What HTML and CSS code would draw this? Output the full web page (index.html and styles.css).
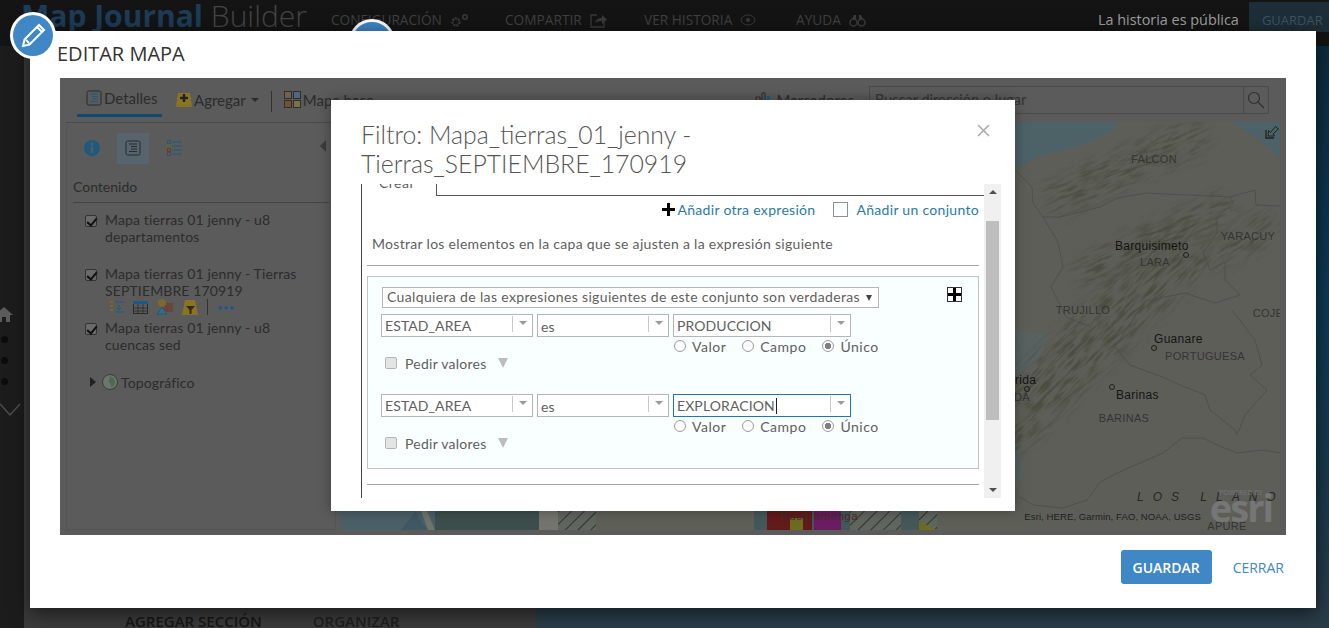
FILE: index.html
```html
<!DOCTYPE html>
<html lang="en">
<head>
    <meta charset="UTF-8">
    <meta name="viewport" content="width=device-width, initial-scale=1.0">
    <title>Map Journal Builder</title>
    <link rel="stylesheet" href="styles.css">
</head>
<body>

    <!-- Builder behind the dialogs -->
    <div class="topbar">
        <div class="brand"><strong>Map Journal</strong> <span>Builder</span></div>
        <div class="topnav">
            <span class="nav-config">CONFIGURACIÓN
                <svg width="20" height="14" viewBox="0 0 20 14"><circle cx="6" cy="9" r="3.5" fill="none" stroke="#3a3a3a" stroke-width="2.4" stroke-dasharray="2 1"/><circle cx="15" cy="4" r="2.2" fill="none" stroke="#3a3a3a" stroke-width="1.5"/></svg>
            </span>
            <span class="nav-share">COMPARTIR
                <svg width="18" height="15" viewBox="0 0 18 15"><path d="M7 2H1v12h13V9" fill="none" stroke="#3a3a3a" stroke-width="1.3"/><path d="M5 10c1-4 4-5 7-5V2l5 4.500-5 4.500V8c-3 0-5 .5-7 2z" fill="#3a3a3a"/></svg>
            </span>
            <span class="nav-history">VER HISTORIA
                <svg width="16" height="12" viewBox="0 0 16 12"><ellipse cx="8" cy="6" rx="7" ry="5" fill="none" stroke="#3a3a3a"/><circle cx="8" cy="6" r="2" fill="#3a3a3a"/></svg>
            </span>
            <span class="nav-help">AYUDA
                <svg width="17" height="13" viewBox="0 0 17 13"><circle cx="4.500" cy="8.500" r="3.500" fill="none" stroke="#3a3a3a" stroke-width="1.600"/><circle cx="12.500" cy="8.500" r="3.500" fill="none" stroke="#3a3a3a" stroke-width="1.600"/><path d="M3 5l2-4h2v4M14 5l-2-4h-2v4" fill="#3a3a3a"/></svg>
            </span>
        </div>
        <div class="public-note">La historia es pública</div>
        <div class="top-save">GUARDAR</div>
    </div>

    <div class="workspace">
        <div class="rail">
            <svg class="rail-home" width="18" height="16" viewBox="0 0 18 16"><path d="M9 1L0 9h3v7h4v-5h4v5h4V9h3z" fill="#5c5c5c"/></svg>
            <span class="rail-dot"></span>
            <span class="rail-dot"></span>
            <span class="rail-dot"></span>
            <svg class="rail-check" width="22" height="14" viewBox="0 0 22 14"><path d="M1 1l10 11L21 1" fill="none" stroke="#4d4d4d" stroke-width="1.500"/></svg>
        </div>
        <div class="panel-side">
            <div class="side-tabs">
                <span>AGREGAR SECCIÓN</span>
                <span>ORGANIZAR</span>
            </div>
        </div>
        <div class="stage"></div>
    </div>

    <span class="top-circle"></span>

    <!-- Editar mapa -->
    <div class="edit-modal">
        <h2 class="edit-title">EDITAR MAPA</h2>

        <div class="map-frame">
            <div class="map-toolbar">
                <div class="tool tool-active">
                    <svg width="16" height="16" viewBox="0 0 16 16"><rect x="1" y="1" width="14" height="14" rx="1.500" fill="none" stroke="#2b2b2b"/><path d="M4 4h8M6 6.500h6M6 9h6M4 11.500h8" stroke="#1d5a80"/></svg>
                    Detalles
                </div>
                <div class="tool tool-add">
                    <svg width="18" height="16" viewBox="0 0 18 16"><path d="M3 1h12l2 14H1z" fill="#8a7420"/><path d="M9 2v8M5 6h8" stroke="#222" stroke-width="2.500"/></svg>
                    Agregar <i class="caret"></i>
                </div>
                <span class="tool-sep"></span>
                <div class="tool tool-base">
                    <svg width="17" height="17" viewBox="0 0 17 17"><g fill="#6d6350" stroke="#2f2f2f"><rect x=".5" y=".5" width="7" height="7"/><rect x="9.500" y=".5" width="7" height="7" fill="#4a6a80"/><rect x=".5" y="9.500" width="7" height="7" fill="#75522f"/><rect x="9.500" y="9.500" width="7" height="7" fill="#7a7440"/></g></svg>
                    Mapa base
                </div>
                <div class="tool tool-marks">
                    <svg width="16" height="16" viewBox="0 0 16 16"><path d="M1 15V5h4v10M7 15V1h3v14" fill="none" stroke="#2b2b2b"/><path d="M12 15V4h3v11z" fill="#1d5a80"/></svg>
                    Marcadores
                </div>
                <div class="map-search">
                    <span class="search-text">Buscar dirección o lugar</span>
                    <span class="search-btn">
                        <svg width="18" height="18" viewBox="0 0 18 18"><circle cx="7" cy="7" r="5.500" fill="none" stroke="#2f2f2f" stroke-width="1.200"/><path d="M11 11l6 6" stroke="#2f2f2f" stroke-width="1.200"/></svg>
                    </span>
                </div>
            </div>

            <div class="map-body">
                <div class="contents">
                    <div class="contents-tabs">
                        <svg class="info-icon" width="16" height="16" viewBox="0 0 16 16"><circle cx="8" cy="8" r="8" fill="#1d5a80"/><rect x="6.800" y="6.500" width="2.400" height="6.500" fill="#5b5b5b"/><circle cx="8" cy="4" r="1.400" fill="#5b5b5b"/></svg>
                        <span class="contents-active">
                            <svg width="16" height="16" viewBox="0 0 16 16"><rect x="1" y="1" width="14" height="14" rx="1.500" fill="none" stroke="#2b2b2b"/><path d="M4 4h8M6 6.500h6M6 9h6M4 11.500h8" stroke="#2b2b2b"/></svg>
                        </span>
                        <svg class="legend-icon" width="14" height="16" viewBox="0 0 14 16"><path d="M5 2h9M5 6h9M5 10h9M5 14h9" stroke="#1d5a80"/><g fill="none"><rect x=".5" y=".5" width="3" height="3" stroke="#33566c"/><rect x=".5" y="4.500" width="3" height="3" stroke="#4f6a3a"/><rect x=".5" y="8.500" width="3" height="3" stroke="#6a3a2a"/><rect x=".5" y="12.500" width="3" height="3" stroke="#4d4466"/></g></svg>
                        <i class="collapse-arrow"></i>
                    </div>
                    <div class="contents-head">Contenido</div>
                    <ul class="layers">
                        <li class="layer">
                            <span class="layer-check"></span>
                            <span>Mapa tierras 01 jenny - u8<br>departamentos</span>
                        </li>
                        <li class="layer">
                            <span class="layer-check"></span>
                            <div>
                                <span>Mapa tierras 01 jenny - Tierras<br>SEPTIEMBRE 170919</span>
                                <div class="layer-icons">
                                    <svg width="14" height="14" viewBox="0 0 14 14"><path d="M5 2h9M5 12h9M9 5v5M7 8l2 2 2-2" stroke="#1d5a80" fill="none"/><path d="M0 2h3M0 6h3M0 10h3" stroke="#7a6a20" stroke-width="2"/></svg>
                                    <svg width="15" height="13" viewBox="0 0 15 13"><rect x=".5" y=".5" width="14" height="12" fill="none" stroke="#2b2b2b"/><path d="M0 1.500h15" stroke="#1d5a80" stroke-width="3"/><path d="M5 3v10M10 3v10M0 7h15M0 10h15" stroke="#2b2b2b" stroke-width=".8"/></svg>
                                    <svg width="16" height="16" viewBox="0 0 16 16"><rect x="6" y="4" width="10" height="9" fill="#6b4538"/><circle cx="5" cy="4" r="4" fill="#7a6a30"/><path d="M5 8l5 7H0z" fill="#3c6a85" stroke="#1d5a80"/></svg>
                                    <svg width="16" height="15" viewBox="0 0 16 15"><path d="M3 0h10l3 15H0z" fill="#8a7420"/><path d="M4 6h9l-3.500 4v4h-2v-4z" fill="#2b2b2b"/></svg>
                                    <i class="icons-sep"></i>
                                    <span class="more-dots">•••</span>
                                </div>
                            </div>
                        </li>
                        <li class="layer">
                            <span class="layer-check"></span>
                            <span>Mapa tierras 01 jenny - u8<br>cuencas sed</span>
                        </li>
                        <li class="layer layer-base">
                            <i class="layer-arrow"></i>
                            <svg width="16" height="16" viewBox="0 0 16 16"><circle cx="8" cy="8" r="7.500" fill="#6d7570" stroke="#3c3c3c"/><path d="M8 2c3 1 5 3 5 6s-2 5-4 5c1-3-3-4-2-7z" fill="#4c6a52"/></svg>
                            <span>Topográfico</span>
                        </li>
                    </ul>
                </div>

                <div class="map-view">
                    <svg class="map-svg" width="939" height="408" viewBox="341 122 939 408">
                        <defs>
                            <pattern id="hatch" width="9" height="9" patternUnits="userSpaceOnUse" patternTransform="rotate(45)">
                                <rect width="9" height="9" fill="#5f665e"/>
                                <path d="M0 0v9" stroke="#111" stroke-width="1.200"/>
                            </pattern>
                            <filter id="terrain" x="-10%" y="-30%" width="120%" height="160%" color-interpolation-filters="sRGB">
                                <feGaussianBlur in="SourceGraphic" stdDeviation="9" result="soft"/>
                                <feTurbulence type="fractalNoise" baseFrequency=".05 .35" numOctaves="3" seed="4"/>
                                <feColorMatrix values="0 0 0 0 .29  0 0 0 0 .30  0 0 0 0 .25  0 0 0 3.500 -1.500"/>
                                <feComposite in2="soft" operator="in"/>
                            </filter>
                        </defs>
                        <rect x="341" y="122" width="939" height="408" fill="#5e5e59"/>
                        <path d="M1015 122h105l-10 10-27 13-45 12-23 13zM1230 122h50v35l-13-10-17-14z" fill="#4d6266"/>
                        <path d="M1015 330l35 5-12 25-23 20zM1015 430l10 40-10 20z" fill="#53646a" opacity=".5"/>

                        <!-- mountains -->
                        <rect x="960" y="305" width="280" height="60" fill="#000" filter="url(#terrain)" transform="rotate(-45 1100 340)"/>
                        <rect x="1040" y="150" width="170" height="36" fill="#000" filter="url(#terrain)" transform="rotate(-24 1125 165)"/>
                        <rect x="1070" y="225" width="170" height="36" fill="#000" filter="url(#terrain)" transform="rotate(-24 1150 240)"/>
                        <rect x="1210" y="225" width="70" height="30" fill="#000" filter="url(#terrain)" transform="rotate(-35 1245 240)"/>

                        <g fill="none" stroke="#4f4f4f" stroke-width="1">
                            <path d="M1015 170l17 17 1 16 10 14h17l40-10 17-9 30-5 40 2 43 2 3 6-16 14v16l-14 20 7 17 15-8v18l15 15"/>
                            <path d="M1230 197l25-7 1 15 24 1"/>
                            <path d="M1043 217l15 25 5 25-12 20 15 30 25 10"/>
                            <path d="M1115 347l15 18 35 13 15 7 25 10 5 15 25 20 2 5 8-20 22-25-17-15 12-10-7-25-23-30"/>
                            <path d="M1020 497l13 8 30 3 24-8 13-18 17-9 23-10 23-10 19-15h21l14 7 20 8 26-3 17 3"/>
                            <path d="M1240 295l-25 8-30-10-40 8-30 46"/>
                        </g>

                        <!-- bottom strip, shows under the filter dialog -->
                        <rect x="341" y="511" width="94" height="19" fill="#4a5f68"/>
                        <path d="M401 530l14-18 12 18z" fill="#3f5864"/>
                        <path d="M421 511h6l8 19h-7z" fill="#6f746d"/>
                        <rect x="435" y="511" width="104" height="19" fill="#3d4f4d"/>
                        <rect x="539" y="511" width="19" height="19" fill="#74756f"/>
                        <rect x="558" y="511" width="38" height="19" fill="url(#hatch)"/>
                        <rect x="596" y="511" width="158" height="19" fill="#5e6058"/>
                        <rect x="754" y="511" width="13" height="19" fill="#44585a"/>
                        <rect x="767" y="511" width="45" height="19" fill="#631a1a"/>
                        <rect x="790" y="518" width="13" height="12" fill="#6c6c20"/>
                        <rect x="812" y="511" width="2" height="19" fill="#44585a"/>
                        <rect x="814" y="511" width="27" height="19" fill="#6c1c63"/>
                        <rect x="841" y="511" width="9" height="19" fill="#44585a"/>
                        <rect x="850" y="511" width="51" height="19" fill="url(#hatch)"/>
                        <rect x="901" y="511" width="18" height="19" fill="#44585a"/>
                        <rect x="919" y="511" width="18" height="19" fill="url(#hatch)"/>
                        <path d="M919 521l18 9h-18z" fill="#6c6c20"/>
                        <rect x="937" y="511" width="78" height="19" fill="#5e6058"/>
                        <text class="lbl-dim" x="781" y="520">Bucaramanga</text>

                        <g>
                            <text class="lbl-state" x="1154" y="163">FALCON</text>
                            <text class="lbl-state" x="1248" y="240">YARACUY</text>
                            <text class="lbl-state" x="1155" y="266">LARA</text>
                            <text class="lbl-state" x="1083" y="314">TRUJILLO</text>
                            <text class="lbl-state" x="1268" y="317">COJE</text>
                            <text class="lbl-state" x="1205" y="360">PORTUGUESA</text>
                            <text class="lbl-state" x="1124" y="422">BARINAS</text>
                            <text class="lbl-state" x="1022" y="401">DA</text>
                            <text class="lbl-state" x="1227" y="530">APURE</text>
                            <text class="lbl-city" x="1115" y="250">Barquisimeto</text>
                            <text class="lbl-city" x="1154" y="343">Guanare</text>
                            <text class="lbl-city" x="1116" y="399">Barinas</text>
                            <text class="lbl-city" x="1015" y="384">rida</text>
                            <text class="lbl-region" x="1137" y="501">LOS LLANO</text>
                        </g>
                        <g fill="none" stroke="#1e1e1e" stroke-width="1">
                            <circle cx="1186" cy="255" r="2.500"/>
                            <circle cx="1154" cy="348" r="2.500"/>
                            <circle cx="1112" cy="387" r="2.500"/>
                            <circle cx="1027" cy="389" r="2.500"/>
                        </g>
                    </svg>
                    <svg class="expand-icon" width="14" height="14" viewBox="0 0 14 14"><path d="M1 5v8h8" fill="none" stroke="#222" stroke-width="1.300"/><path d="M3 11l.5-5.500 2 2 5-6 3 2.500-5.500 5 1.500 2z" fill="none" stroke="#222"/></svg>
                    <div class="attribution">Esri, HERE, Garmin, FAO, NOAA, USGS</div>
                    <div class="esri-logo">
                        <small>POWERED BY</small>
                        <b>esri</b>
                    </div>
                </div>
            </div>
        </div>

        <div class="edit-actions">
            <button class="btn-save">GUARDAR</button>
            <a class="btn-close">CERRAR</a>
        </div>
    </div>

    <!-- Pencil badge on the modal corner -->
    <span class="edit-badge">
        <svg width="30" height="30" viewBox="0 0 30 30"><path d="M5 25l1.500-6.500L21 4l5 5-14.500 14.500zM19 6l5 5M8 19l3 3" fill="none" stroke="#fff" stroke-width="2"/></svg>
    </span>

    <!-- Filter dialog -->
    <div class="filter-dialog">
        <div class="filter-head">
            <h3>Filtro: Mapa_tierras_01_jenny -<br>Tierras_SEPTIEMBRE_170919</h3>
            <svg class="filter-close" width="13" height="13" viewBox="0 0 13 13"><path d="M1 1l11 11M12 1L1 12" stroke="#a8a8a8" stroke-width="1.500"/></svg>
        </div>

        <div class="filter-scroll">
            <div class="filter-content">
                <div class="tab-row">
                    <div class="tab-create"><span>Crear</span></div>
                    <div class="tab-line"></div>
                </div>

                <div class="add-row">
                    <span class="plus-black"></span>
                    <a class="add-link">Añadir otra expresión</a>
                    <span class="set-box"></span>
                    <a class="add-link">Añadir un conjunto</a>
                </div>

                <p class="filter-hint">Mostrar los elementos en la capa que se ajusten a la expresión siguiente</p>
                <hr class="filter-hr">

                <div class="expr-set">
                    <div class="set-top">
                        <div class="set-select">Cualquiera de las expresiones siguientes de este conjunto son verdaderas <i></i></div>
                        <span class="set-plus"></span>
                    </div>

                    <div class="expr">
                        <div class="expr-row">
                            <div class="combo combo-field"><span>ESTAD_AREA</span><i></i></div>
                            <div class="combo combo-op"><span class="op">es</span><i></i></div>
                            <div class="value-col">
                                <div class="combo combo-value"><span>PRODUCCION</span><i></i></div>
                                <div class="radios">
                                    <label><b class="radio"></b>Valor</label>
                                    <label><b class="radio"></b>Campo</label>
                                    <label><b class="radio radio-on"></b>Único</label>
                                </div>
                            </div>
                        </div>
                        <div class="ask-row">
                            <span class="ask-box"></span>
                            Pedir valores
                            <i class="ask-arrow"></i>
                        </div>
                    </div>

                    <div class="expr">
                        <div class="expr-row">
                            <div class="combo combo-field"><span>ESTAD_AREA</span><i></i></div>
                            <div class="combo combo-op"><span class="op">es</span><i></i></div>
                            <div class="value-col">
                                <div class="combo combo-value combo-focus"><span>EXPLORACION</span><i></i></div>
                                <div class="radios">
                                    <label><b class="radio"></b>Valor</label>
                                    <label><b class="radio"></b>Campo</label>
                                    <label><b class="radio radio-on"></b>Único</label>
                                </div>
                            </div>
                        </div>
                        <div class="ask-row">
                            <span class="ask-box"></span>
                            Pedir valores
                            <i class="ask-arrow"></i>
                        </div>
                    </div>
                </div>

                <hr class="filter-hr filter-hr-low">

                <div class="btn-tops">
                    <span></span>
                    <span></span>
                </div>
            </div>

            <div class="scrollbar">
                <i class="sb-up"></i>
                <span class="sb-thumb"></span>
                <i class="sb-down"></i>
            </div>
        </div>
    </div>

</body>
</html>
```

FILE: styles.css
```css
* {
    box-sizing: border-box;
}
html, body {
    height: 100%;
}
body {
    margin: 0;
    overflow: hidden;
    background: #161616;
    font-family: "Open Sans", sans-serif;
    display: flex;
    flex-direction: column;
}

/* Builder behind the dialogs */
.topbar {
    height: 46px;
    flex: none;
    display: flex;
    align-items: flex-start;
    background: #141414;
    padding-left: 21px;
    white-space: nowrap;
}
.brand {
    font-size: 30px;
    line-height: 32px;
    width: 310px;
    color: #454545;
}
.brand strong {
    color: #1c3c58;
    font-weight: 700;
}
.brand span {
    font-weight: 300;
}
.topnav {
    display: flex;
    font-size: 13.700px;
    color: #404040;
    line-height: 40px;
}
.topnav span {
    display: flex;
    align-items: center;
    gap: 8px;
}
.nav-config {
    width: 174px;
}
.nav-share {
    width: 139px;
}
.nav-history {
    width: 152px;
}
.nav-help {
    width: 120px;
}
.public-note {
    margin-left: 182px;
    font-size: 14.400px;
    line-height: 40px;
    color: #a0a0a0;
}
.top-save {
    margin-left: 10px;
    margin-top: 2px;
    flex: 1;
    height: 30px;
    padding-left: 13px;
    background: #1e2e38;
    color: #3d5463;
    font-size: 13px;
    line-height: 36px;
}
.workspace {
    flex: 1;
    display: flex;
    min-height: 0;
}
.rail {
    width: 24px;
    background: #1c1c1c;
    display: flex;
    flex-direction: column;
    align-items: center;
    padding-top: 260px;
    margin-right: 0;
}
.rail-home {
    margin-left: -16px;
}
.rail-dot {
    width: 7px;
    height: 7px;
    border-radius: 50%;
    background: #0c0c0c;
    margin: 14px 0 0 -16px;
}
.rail-check {
    margin: 18px 0 0 -4px;
}
.panel-side {
    width: 512px;
    background: #3a3a3a;
    position: relative;
    display: flex;
    align-items: flex-end;
}
.side-tabs {
    display: flex;
    gap: 51px;
    padding-left: 101px;
    font-size: 15px;
    font-weight: 600;
    line-height: 20px;
    color: #161616;
    margin-bottom: -3px;
}
.side-tabs span + span {
    color: #1f1f1f;
}
.stage {
    flex: 1;
    background: linear-gradient(180deg, #0c2c40 0%, #0d3a55 45%, #1b3a4c 80%, #2b3c48 100%);
}
.top-circle {
    position: absolute;
    left: 349px;
    top: 19px;
    width: 46px;
    height: 46px;
    border-radius: 50%;
    background: #3f87c5;
    border: 3px solid #fff;
}

/* Editar mapa */
.edit-modal {
    position: absolute;
    left: 30px;
    top: 31px;
    width: 1286px;
    height: 577px;
    background: #fff;
    box-shadow: 0 4px 18px rgba(0, 0, 0, 0.6);
    padding: 0 30px;
}
.edit-title {
    margin: 0 0 2px -3px;
    font-size: 20px;
    font-weight: 400;
    line-height: 45px;
    color: #333;
}
.edit-badge {
    position: absolute;
    left: 10px;
    top: 12px;
    width: 46px;
    height: 47px;
    border-radius: 50%;
    background: #3f87c5;
    border: 3px solid #fff;
    display: flex;
    align-items: center;
    justify-content: center;
}
.map-frame {
    width: 1226px;
    height: 457px;
    background: #5b5b5b;
    font-family: Lato, sans-serif;
    color: #2c2c2c;
    display: flex;
    flex-direction: column;
}
.map-toolbar {
    height: 44px;
    flex: none;
    display: flex;
    align-items: flex-start;
    padding-left: 17px;
    font-size: 15px;
}
.tool {
    display: flex;
    align-items: center;
    gap: 2px;
    height: 39px;
    padding-top: 4px;
}
.tool-active {
    width: 85px;
    padding-left: 9px;
    border-bottom: 3px solid #0f4a72;
}
.tool-add {
    margin-left: 13px;
    gap: 1px;
}
.caret {
    width: 0;
    height: 0;
    margin-left: 4px;
    border: 4px solid transparent;
    border-top: 4px solid #2c2c2c;
    border-bottom: 0;
}
.tool-sep {
    width: 1px;
    height: 21px;
    margin: 13px 12px 0 12px;
    background: #333;
}
.tool-marks {
    margin-left: auto;
    gap: 6px;
}
.map-search {
    display: flex;
    width: 400px;
    height: 28px;
    margin: 8px 17px 0 15px;
    border: 1px solid #4a4a4a;
    font-size: 14.500px;
    color: #333;
    line-height: 26px;
}
.search-text {
    flex: 1;
    padding-left: 5px;
}
.search-btn {
    width: 25px;
    border-left: 1px solid #4a4a4a;
    display: flex;
    align-items: center;
    justify-content: center;
}
.map-body {
    flex: 1;
    display: flex;
    padding: 0 6px 5px;
    gap: 5px;
    min-height: 0;
}
.contents {
    width: 270px;
    border: 1px solid #545454;
    font-size: 14px;
    border-top-color: #4a4a4a;
}
.contents-tabs {
    display: flex;
    align-items: center;
    height: 47px;
    padding: 3px 0 0 17px;
    position: relative;
}
.contents-active {
    width: 32px;
    height: 31px;
    margin-left: 17px;
    background: #56646e;
    display: flex;
    align-items: center;
    justify-content: center;
}
.legend-icon {
    margin-left: 18px;
}
.collapse-arrow {
    position: absolute;
    right: 9px;
    top: 17px;
    border: 6px solid transparent;
    border-right: 6px solid #3c3c3c;
    border-left: 0;
}
.contents-head {
    margin: 0 6px;
    height: 33px;
    line-height: 34px;
    font-size: 14px;
    border-bottom: 1px solid #444;
}
.layers {
    list-style: none;
    margin: 0;
    padding: 0 0 0 18px;
    line-height: 17px;
    letter-spacing: 0.13px;
}
.layer {
    display: flex;
    gap: 8px;
    margin-top: 11px;
    height: 43px;
}
.layer:first-child {
    margin-top: 8px;
}
.layer-check {
    flex: none;
    width: 12px;
    height: 12px;
    margin-top: 4px;
    border: 1px solid #333;
    border-radius: 2px;
    background: #6a6a6a;
    position: relative;
}
.layer-check::after {
    content: "";
    position: absolute;
    left: 3px;
    top: 0;
    width: 4px;
    height: 8px;
    border: solid #111;
    border-width: 0 2px 2px 0;
    transform: rotate(40deg);
}
.layer-icons {
    display: flex;
    align-items: center;
    gap: 9px;
    height: 18px;
    margin-top: -1px;
    padding-left: 5px;
}
.icons-sep {
    width: 1px;
    height: 16px;
    background: #333;
}
.more-dots {
    color: #1d5a80;
    font-size: 10px;
    letter-spacing: 0;
}
.layer-base {
    align-items: center;
    gap: 3px;
    height: 20px;
    margin-top: 10px;
    padding-left: 5px;
    font-size: 14px;
}
.layer-arrow {
    border: 5px solid transparent;
    border-left: 6px solid #222;
    border-right: 0;
    margin-right: 3px;
}
.layer-base svg {
    margin-right: 0;
}
.map-view {
    position: relative;
    width: 939px;
    height: 408px;
    overflow: hidden;
}
.map-svg {
    display: block;
}
.lbl-state {
    font: 11px "Liberation Sans", sans-serif;
    fill: #343434;
    text-anchor: middle;
    letter-spacing: 0.3px;
}
.lbl-dim {
    font: 11.500px "Liberation Sans", sans-serif;
    fill: #4a2a2a;
    letter-spacing: 0.5px;
}
.lbl-city {
    font: 12px "Liberation Sans", sans-serif;
    fill: #141414;
    letter-spacing: 0.3px;
}
.lbl-region {
    font: italic 12px "Liberation Sans", sans-serif;
    fill: #262626;
    letter-spacing: 9px;
}
.expand-icon {
    position: absolute;
    right: 1px;
    top: 3px;
}
.attribution {
    position: absolute;
    right: 79px;
    bottom: 8px;
    font: 9.500px "Liberation Sans", sans-serif;
    color: #202020;
    letter-spacing: 0.1px;
}
.esri-logo {
    position: absolute;
    right: 8px;
    bottom: 4px;
    color: #767676;
    font-family: "Open Sans", sans-serif;
    line-height: 1;
    text-align: center;
}
.esri-logo small {
    display: block;
    font-size: 7px;
    margin-bottom: -8px;
}
.esri-logo b {
    font-size: 38px;
    line-height: 38px;
    letter-spacing: -2px;
}
.edit-actions {
    display: flex;
    align-items: center;
    justify-content: flex-end;
    gap: 21px;
    margin-top: 15px;
    padding-right: 2px;
}
.btn-save {
    width: 91px;
    height: 34px;
    border: none;
    border-radius: 3px;
    background: #3f87c5;
    color: #fff;
    font-family: "Open Sans", sans-serif;
    font-size: 14px;
    font-weight: 600;
}
.btn-close {
    color: #3f87c5;
    font-size: 14px;
}

/* Filter dialog */
.filter-dialog {
    position: absolute;
    left: 331px;
    top: 100px;
    width: 684px;
    height: 411px;
    background: #fff;
    box-shadow: 0 0 12px rgba(0, 0, 0, 0.35);
    font-family: Lato, sans-serif;
    color: #606060;
    font-size: 14px;
}
.filter-head {
    height: 84px;
    padding: 20px 30px 0;
    position: relative;
}
.filter-head h3 {
    margin: 0;
    font-size: 24.800px;
    font-weight: 300;
    line-height: 29px;
    color: #555;
}
.filter-close {
    position: absolute;
    right: 25px;
    top: 24px;
}
.filter-scroll {
    display: flex;
    width: 640px;
    height: 314px;
    margin-left: 30px;
}
.filter-content {
    width: 623px;
    flex: none;
    overflow: hidden;
    border-left: 1px solid #444;
    padding-left: 5px;
}
.tab-row {
    display: flex;
    height: 12px;
}
.tab-create {
    width: 69px;
    height: 12px;
    overflow: hidden;
    padding-left: 12px;
}
.tab-create span {
    display: block;
    margin-top: -9px;
    line-height: 16px;
    font-size: 14px;
    letter-spacing: 0.5px;
}
.tab-line {
    flex: 1;
    margin-right: -1px;
    border-left: 1px solid #555;
    border-bottom: 1px solid #555;
}
.add-row {
    display: flex;
    align-items: center;
    justify-content: flex-end;
    height: 25px;
    padding: 2px 5px 0 0;
}
.plus-black {
    width: 13px;
    height: 13px;
    margin-right: 3px;
    background:
        linear-gradient(#000, #000) center / 13px 3px no-repeat,
        linear-gradient(#000, #000) center / 3px 13px no-repeat;
}
.add-link {
    color: #2a7aa8;
    letter-spacing: 0.3px;
}
.set-box {
    width: 15px;
    height: 15px;
    margin: 0 8px 0 18px;
    border: 1px solid #8f8f8f;
    background: #fbfdff;
}
.filter-hint {
    margin: 0 0 0 5px;
    height: 44px;
    padding-top: 14px;
    line-height: 18px;
    letter-spacing: 0.3px;
}
.filter-hr {
    border: 0;
    border-top: 1px solid #a6a6a6;
    margin: 0;
    width: 612px;
}
.expr-set {
    width: 612px;
    height: 193px;
    margin-top: 10px;
    border: 1px solid #c2c2c2;
    background: #f9ffff;
    padding: 10px 0 0 13px;
}
.set-top {
    display: flex;
    align-items: flex-start;
}
.set-select {
    width: 497px;
    height: 21px;
    margin-left: 1px;
    border: 1px solid #b5b5b5;
    background: #fff;
    padding-left: 4px;
    line-height: 18px;
    letter-spacing: 0.35px;
    white-space: nowrap;
}
.set-select i {
    display: inline-block;
    margin-left: 2px;
    vertical-align: 1px;
    border: 3.500px solid transparent;
    border-top: 6px solid #444;
    border-bottom: 0;
}
.set-plus {
    width: 15px;
    height: 15px;
    margin-left: 68px;
    border: 1px solid #333;
    background:
        linear-gradient(#000, #000) center / 13px 3px no-repeat,
        linear-gradient(#000, #000) center / 3px 13px no-repeat,
        #fff;
}
.expr {
    height: 80px;
    margin-top: 6px;
}
.expr + .expr {
    margin-top: 0;
}
.expr-row {
    display: flex;
    align-items: flex-start;
    gap: 4px;
    height: 39px;
}
.combo {
    display: flex;
    align-items: stretch;
    height: 23px;
    border: 1px solid #b5b5b5;
    background: #fff;
    line-height: 21px;
    letter-spacing: 0.1px;
}
.combo span {
    flex: 1;
    padding-left: 3px;
    white-space: nowrap;
}
.combo .op {
    line-height: 24px;
}
.combo i {
    flex: none;
    width: 20px;
    margin: 1px 0 4px;
    border-left: 1px solid #c8c8c8;
    position: relative;
}
.combo i::after {
    content: "";
    position: absolute;
    left: 6px;
    top: 5px;
    border: 4.500px solid transparent;
    border-top: 4.500px solid #9a9a9a;
    border-bottom: 0;
}
.combo-field {
    width: 152px;
}
.combo-op {
    width: 132px;
}
.combo-value {
    width: 178px;
}
.combo-focus {
    border-color: #1c78b0;
}
.combo-focus span::after {
    content: "";
    display: inline-block;
    width: 1px;
    height: 16px;
    margin-left: 1px;
    vertical-align: -3px;
    background: #222;
}
.radios {
    display: flex;
    gap: 16px;
    height: 18px;
    align-items: center;
    padding-left: 1px;
    letter-spacing: 0.5px;
}
.radios label {
    display: flex;
    align-items: center;
    gap: 6px;
}
.radio {
    width: 12px;
    height: 12px;
    border: 1px solid #9c9c9c;
    border-radius: 50%;
    background: #fbfbfb;
}
.radio-on {
    background: radial-gradient(circle, #7f7f7f 0 3px, #fbfbfb 3.500px);
}
.ask-row {
    display: flex;
    align-items: center;
    height: 20px;
    padding-left: 4px;
    letter-spacing: 0.25px;
}
.ask-box {
    width: 12px;
    height: 12px;
    margin-right: 8px;
    border: 1px solid #b5b5b5;
    border-radius: 2px;
    background: #e4e4e4;
}
.ask-arrow {
    margin-left: 12px;
    border: 5.500px solid transparent;
    border-top: 10px solid #bdbdbd;
    border-bottom: 0;
}
.filter-hr-low {
    margin-top: 15px;
}
.btn-tops {
    display: flex;
    gap: 9px;
    margin: 13px 0 0 44px;
}
.btn-tops span {
    display: block;
    height: 1px;
    width: 162px;
    background: #4aa9dc;
}
.btn-tops span + span {
    width: 284px;
}
.scrollbar {
    width: 17px;
    background: #f0f0f0;
    display: flex;
    flex-direction: column;
    align-items: center;
    position: relative;
}
.sb-up {
    margin-top: 6px;
    border: 4px solid transparent;
    border-bottom: 4px solid #505050;
    border-top: 0;
}
.sb-thumb {
    width: 13px;
    height: 199px;
    margin-top: 27px;
    background: #bebebe;
}
.sb-down {
    margin-top: 68px;
    border: 4px solid transparent;
    border-top: 4px solid #505050;
    border-bottom: 0;
}
```
